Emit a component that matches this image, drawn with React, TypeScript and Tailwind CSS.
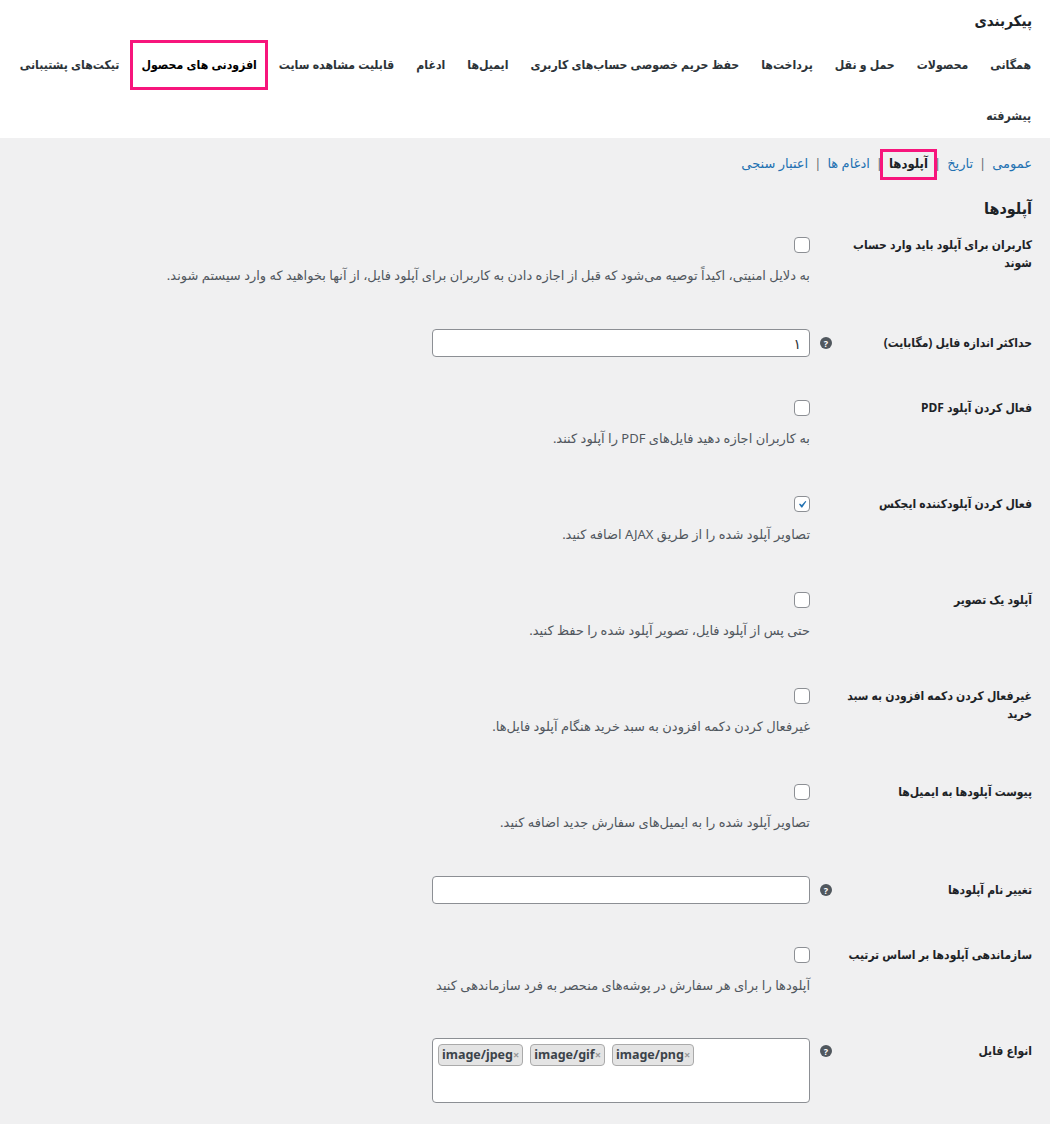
import React from 'react';

const mainTabs = [
  'همگانی',
  'محصولات',
  'حمل و نقل',
  'پرداخت‌ها',
  'حفظ حریم خصوصی حساب‌های کاربری',
  'ایمیل‌ها',
  'ادغام',
  'قابلیت مشاهده سایت',
  'افزودنی های محصول',
  'تیکت‌های پشتیبانی',
];

const subTabs = ['عمومی', 'تاریخ', 'آپلودها', 'ادغام ها', 'اعتبار سنجی'];

type Row =
  | { kind: 'check'; label: React.ReactNode; desc: string; checked?: boolean }
  | { kind: 'input'; label: string; value?: string }
  | { kind: 'tags'; label: string; tags: string[] };

const rows: Row[] = [
  {
    kind: 'check',
    label: (
      <>
        کاربران برای آپلود باید وارد حساب
        <br />
        شوند
      </>
    ),
    desc: 'به دلایل امنیتی، اکیداً توصیه می‌شود که قبل از اجازه دادن به کاربران برای آپلود فایل، از آنها بخواهید که وارد سیستم شوند.',
  },
  { kind: 'input', label: 'حداکثر اندازه فایل (مگابایت)', value: '۱' },
  { kind: 'check', label: 'فعال کردن آپلود PDF', desc: 'به کاربران اجازه دهید فایل‌های PDF را آپلود کنند.' },
  {
    kind: 'check',
    label: 'فعال کردن آپلودکننده ایجکس',
    desc: 'تصاویر آپلود شده را از طریق AJAX اضافه کنید.',
    checked: true,
  },
  { kind: 'check', label: 'آپلود یک تصویر', desc: 'حتی پس از آپلود فایل، تصویر آپلود شده را حفظ کنید.' },
  {
    kind: 'check',
    label: (
      <>
        غیرفعال کردن دکمه افزودن به سبد
        <br />
        خرید
      </>
    ),
    desc: 'غیرفعال کردن دکمه افزودن به سبد خرید هنگام آپلود فایل‌ها.',
  },
  {
    kind: 'check',
    label: 'پیوست آپلودها به ایمیل‌ها',
    desc: 'تصاویر آپلود شده را به ایمیل‌های سفارش جدید اضافه کنید.',
  },
  { kind: 'input', label: 'تغییر نام آپلودها' },
  {
    kind: 'check',
    label: 'سازماندهی آپلودها بر اساس ترتیب',
    desc: 'آپلودها را برای هر سفارش در پوشه‌های منحصر به فرد سازماندهی کنید',
  },
  { kind: 'tags', label: 'انواع فایل', tags: ['image/jpeg', 'image/gif', 'image/png'] },
];

const bold = "[font-family:'Noto_Sans','DejaVu_Sans_Condensed','DejaVu_Sans',sans-serif] font-bold";
const labelCls = `w-[190px] shrink-0 whitespace-nowrap text-[12px] leading-[18px] text-[#1d2327] ${bold}`;

function Checkbox({ checked }: { checked?: boolean }) {
  return (
    <span className="flex h-4 w-4 items-center justify-center rounded-[4px] border border-[#8c8f94] bg-white">
      {checked && (
        <svg viewBox="0 0 20 20" className="h-[15px] w-[15px]">
          <path d="M14.83 4.89l1.34.94-5.81 8.38H9.02L5.78 9.67l1.34-1.25 2.57 2.4z" fill="#2271b1" />
        </svg>
      )}
    </span>
  );
}

function HelpTip() {
  return (
    <span className="flex h-3 w-3 items-center justify-center rounded-full bg-[#50575e] text-[9px] font-bold leading-none text-white">
      ?
    </span>
  );
}

function SettingRow({ row }: { row: Row }) {
  if (row.kind === 'check') {
    return (
      <div className="flex h-[96px] pt-[14px]">
        <div className={labelCls}>{row.label}</div>
        <div className="w-[32px] shrink-0" />
        <div className="flex-1 pt-[1px]">
          <Checkbox checked={row.checked} />
          <p className="mt-[12px] text-[13px] leading-[20px] text-[#50575e]">{row.desc}</p>
        </div>
      </div>
    );
  }
  if (row.kind === 'input') {
    return (
      <div className="flex h-[67px] items-start pt-[11px]">
        <div className={`${labelCls} pt-[5px]`}>{row.label}</div>
        <div className="flex h-[28px] w-[32px] shrink-0 items-center justify-center">
          <HelpTip />
        </div>
        <div className="flex-1">
          <div className="flex h-[28px] w-[378px] items-center rounded-[4px] border border-[#8c8f94] bg-white px-[8px] text-[14px] text-[#2c3338]">
            {row.value}
          </div>
        </div>
      </div>
    );
  }
  return (
    <div className="flex pt-[10px] pb-[20px]">
      <div className={`${labelCls} pt-[4px]`}>{row.label}</div>
      <div className="flex h-[26px] w-[32px] shrink-0 items-center justify-center">
        <HelpTip />
      </div>
      <div className="flex-1">
        <div
          dir="ltr"
          className="flex h-[65px] w-[378px] items-start gap-[7px] rounded-[4px] border border-[#8c8f94] bg-white px-[5px] pt-[5px]"
        >
          {row.tags.map((t) => (
            <span
              key={t}
              className="flex h-[22px] items-center rounded-[4px] border border-[#aaa] bg-[#e4e4e4] px-[3px] text-[12.5px] font-bold text-[#3c434a]"
            >
              {t}
              <span className="text-[11px] text-[#999]">×</span>
            </span>
          ))}
        </div>
      </div>
    </div>
  );
}

export default function App() {
  return (
    <div
      dir="rtl"
      className="min-h-[1124px] bg-[#f0f0f1] [font-family:'Noto_Sans','DejaVu_Sans',sans-serif]"
    >
      <div className="h-[138px] overflow-hidden bg-white">
        <div className={`pr-[18px] pt-[10px] text-[15px] leading-[20px] text-[#1d2327] ${bold}`}>پیکربندی</div>
        <div className="mt-[10px] flex h-[50px] items-center whitespace-nowrap pr-[8px]">
          {mainTabs.map((t) => {
            const active = t === 'افزودنی های محصول';
            return (
              <div
                key={t}
                className={
                  `relative flex h-[50px] items-center px-[11px] text-[12.2px] ${bold} ` +
                  (active ? 'text-black' : 'text-[#2c3338]')
                }
              >
                {t}
                {active && <span className="absolute inset-0 border-[3px] border-[#f7157c]" />}
              </div>
            );
          })}
        </div>
        <div className="flex h-[48px] items-center pr-[8px]">
          <div className={`px-[11px] pt-[4px] text-[12.2px] text-[#2c3338] ${bold}`}>پیشرفته</div>
        </div>
      </div>

      <div className="pr-[18px] pl-[20px] pt-[15px]">
        <ul className="flex h-[20px] items-center text-[13px] leading-[20px]">
          {subTabs.map((t, i) => {
            const active = t === 'آپلودها';
            return (
              <li key={t} className="flex items-center">
                <span className={'relative ' + (active ? `text-[#1d2327] ${bold}` : 'text-[#2271b1]')}>
                  {t}
                  {active && (
                    <span className="absolute -top-[4px] -bottom-[7px] -left-[9px] -right-[9px] border-[3px] border-[#f7157c]" />
                  )}
                </span>
                {i < subTabs.length - 1 && <span className="px-[6px] text-[#646970]">|</span>}
              </li>
            );
          })}
        </ul>
        <h2 className={`mt-[23px] text-[16px] leading-[24px] text-[#1d2327] ${bold}`}>آپلودها</h2>
        <div className="mt-[2px]">
          {rows.map((r, i) => (
            <SettingRow key={i} row={r} />
          ))}
        </div>
      </div>
    </div>
  );
}
